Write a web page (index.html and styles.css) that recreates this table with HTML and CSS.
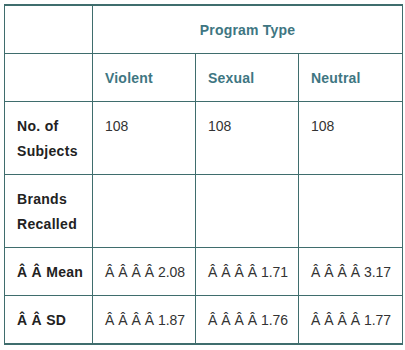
FILE: index.html
```html
<!DOCTYPE html>
<html>
<head>
<meta charset="utf-8">
<link rel="stylesheet" href="styles.css">
</head>
<body>
<table class="data">
  <colgroup>
    <col class="c0"><col class="c1"><col class="c2"><col class="c3">
  </colgroup>
  <tr>
    <td></td>
    <td colspan="3" class="head center">Program Type</td>
  </tr>
  <tr>
    <td></td>
    <td class="head">Violent</td>
    <td class="head">Sexual</td>
    <td class="head">Neutral</td>
  </tr>
  <tr>
    <td class="label">No. of<br>Subjects</td>
    <td>108</td>
    <td>108</td>
    <td>108</td>
  </tr>
  <tr>
    <td class="label">Brands<br>Recalled</td>
    <td></td>
    <td></td>
    <td></td>
  </tr>
  <tr>
    <td class="label">Â Â Mean</td>
    <td>Â Â Â Â 2.08</td>
    <td>Â Â Â Â 1.71</td>
    <td>Â Â Â Â 3.17</td>
  </tr>
  <tr>
    <td class="label">Â Â SD</td>
    <td>Â Â Â Â 1.87</td>
    <td>Â Â Â Â 1.76</td>
    <td>Â Â Â Â 1.77</td>
  </tr>
</table>
</body>
</html>
```

FILE: styles.css
```css
html, body {
  margin: 0;
  background: #ffffff;
}
body {
  padding: 4px;
  font-family: "Liberation Sans", Arial, sans-serif;
  font-size: 14px;
  color: #333333;
}
.data {
  border-collapse: collapse;
  width: 398px;
  table-layout: fixed;
  border-top: 2px solid #3f6d6d;
  border-bottom: 2px solid #3f6d6d;
}
.c0 { width: 88px; }
.c1 { width: 103px; }
.c2 { width: 103px; }
.c3 { width: 104px; }
.data td {
  border: 1px solid #3f6d6d;
  padding: 12px 12px 10px;
  line-height: 25px;
  vertical-align: top;
  text-align: left;
  white-space: nowrap;
}
.data td.head {
  color: #3e7682;
  font-weight: bold;
  letter-spacing: 0.2px;
}
.data td.center {
  text-align: center;
}
.data td.label {
  font-weight: bold;
  color: #222222;
  letter-spacing: 0.3px;
}
```
